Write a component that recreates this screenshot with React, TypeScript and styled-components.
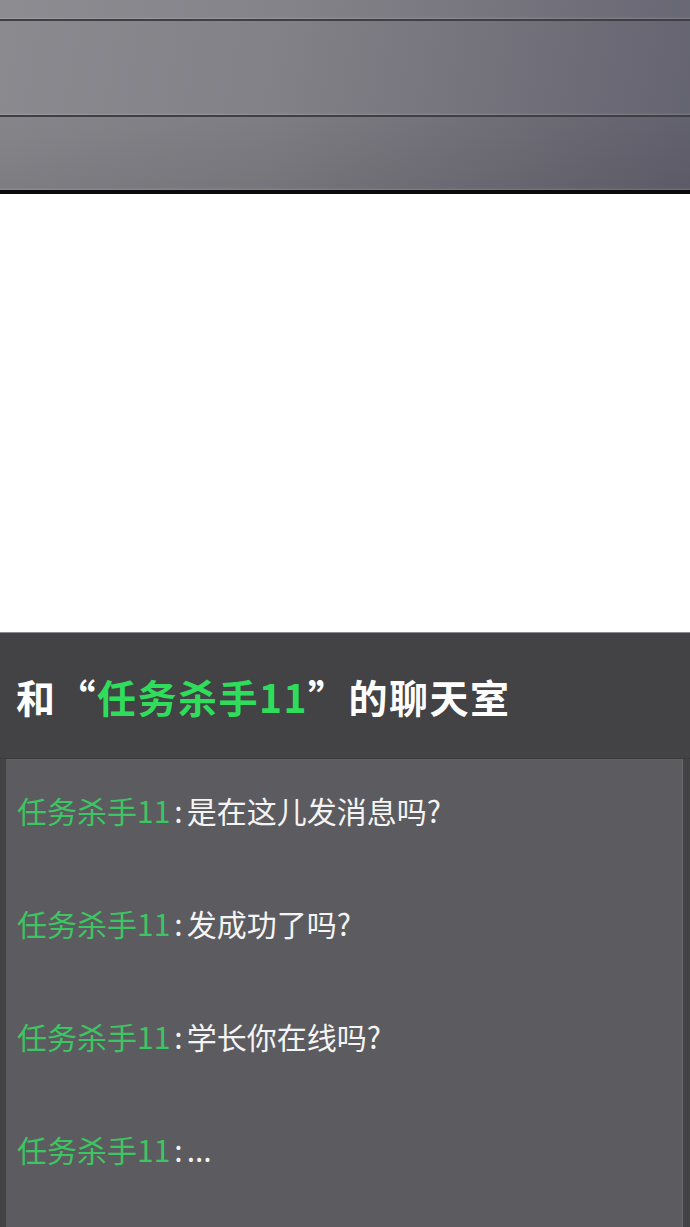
import React from "react";
import styled, { createGlobalStyle } from "styled-components";

const GlobalStyle = createGlobalStyle`
  html, body {
    margin: 0;
    padding: 0;
    background: #ffffff;
  }
  #root {
    width: 690px;
    height: 1227px;
  }
`;

const messages = [
  { from: "任务杀手11", text: "是在这儿发消息吗?" },
  { from: "任务杀手11", text: "发成功了吗?" },
  { from: "任务杀手11", text: "学长你在线吗?" },
  { from: "任务杀手11", text: "..." },
];

const App = () => {
  return (
    <Page>
      <GlobalStyle />
      <Shutter>
        <Slat height={19} />
        <Slat height={94} />
        <Slat height={73} />
      </Shutter>
      <Blank />
      <ChatRoom>
        <RoomTitle>
          和<Quote>“</Quote>
          <Highlight>任务杀手11</Highlight>
          <Quote>”</Quote>的聊天室
        </RoomTitle>
        <MessageBox>
          {messages.map((m, i) => (
            <MessageRow key={i}>
              <Sender>{m.from}</Sender>
              <Colon>:</Colon>
              <Body>{m.text}</Body>
            </MessageRow>
          ))}
        </MessageBox>
      </ChatRoom>
    </Page>
  );
};

const Page = styled.div`
  width: 690px;
  height: 1227px;
  display: flex;
  flex-direction: column;
  overflow: hidden;
  font-family: "Noto Sans CJK SC", "Noto Sans", sans-serif;
`;

const Shutter = styled.div`
  height: 190px;
  display: flex;
  flex-direction: column;
  background: linear-gradient(100deg, #8b8a8f 0%, #828187 40%, #716f79 75%, #646370 100%);
  border-bottom: 4px solid #0a0a0c;
`;

const Slat = styled.div<{ height: number }>`
  height: ${({ height }) => height}px;
  border-bottom: 2px solid #403f46;
  box-shadow: inset 0 -3px 2px -2px rgba(255, 255, 255, 0.15);
  &:last-child {
    border-bottom: none;
    flex: 1;
    background: linear-gradient(180deg, rgba(0, 0, 0, 0.03), rgba(0, 0, 0, 0.09));
  }
  &:first-child {
    background: rgba(255, 255, 255, 0.02);
  }
`;

const Blank = styled.div`
  height: 438px;
  background: #ffffff;
`;

const ChatRoom = styled.div`
  flex: 1;
  display: flex;
  flex-direction: column;
  background: #434245;
  border-top: 1px solid #8b8b8d;
`;

const RoomTitle = styled.h1`
  margin: 0;
  height: 126px;
  display: flex;
  align-items: center;
  padding-left: 16px;
  color: #ffffff;
  font-size: 39px;
  font-weight: 700;
  letter-spacing: 1.5px;
  white-space: nowrap;
  box-sizing: border-box;
  border-bottom: 1px solid #3a393c;
`;

const Quote = styled.span`
  color: #ffffff;
`;

const Highlight = styled.span`
  color: #2fdc5c;
`;

const MessageBox = styled.div`
  flex: 1;
  margin: 0 7px 0 6px;
  padding: 30px 0 0 11px;
  display: flex;
  flex-direction: column;
  gap: 73px;
  background: #5c5b60;
  border-right: 1px solid #6a696e;
  border-top: 1px solid #616065;
`;

const MessageRow = styled.div`
  height: 40px;
  display: flex;
  align-items: center;
  font-size: 30px;
  white-space: nowrap;
`;

const Sender = styled.span`
  color: #3ec563;
`;

const Colon = styled.span`
  color: #f2f2f2;
  margin: 0 4px 0 4px;
`;

const Body = styled.span`
  color: #f4f4f4;
`;

export default App;
